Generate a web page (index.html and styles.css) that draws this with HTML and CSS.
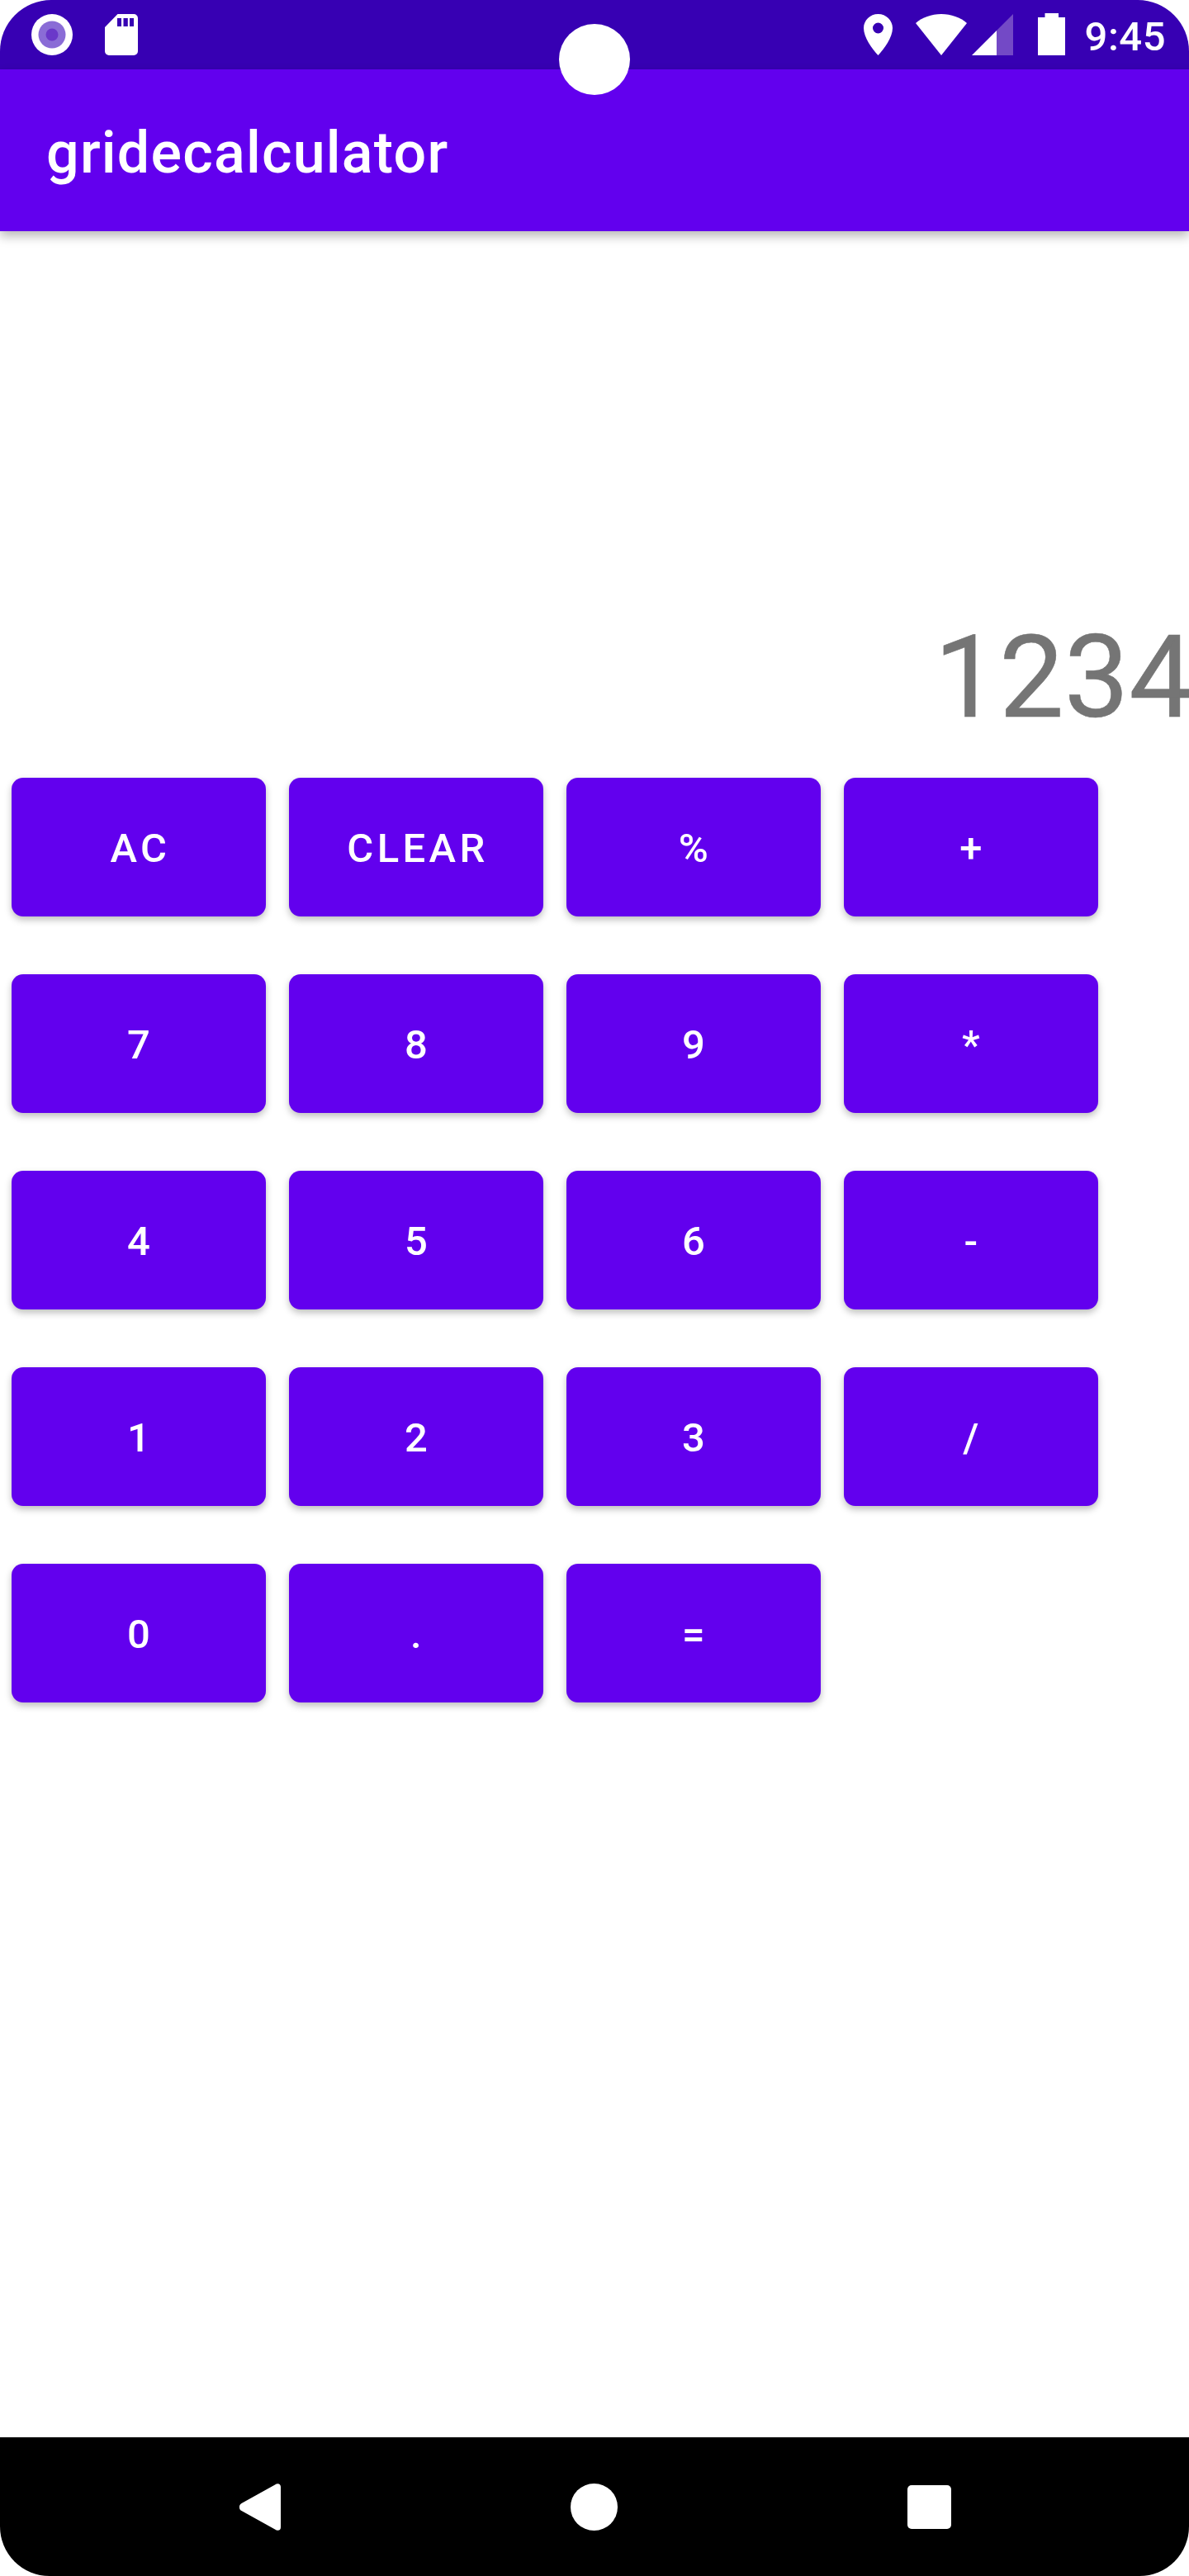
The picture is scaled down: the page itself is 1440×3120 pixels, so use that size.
FILE: index.html
```html
<!DOCTYPE html>
<html lang="en">
<head>
  <meta charset="UTF-8" />
  <meta name="viewport" content="width=device-width, initial-scale=1.0" />
  <title>gridecalculator</title>
  <link rel="stylesheet" href="styles.css">
</head>
<body>
  <div class="screen">
    <div class="status-bar">
      <div class="status-left">
        <svg class="icon" width="50" height="50" viewBox="0 0 50 50">
          <circle cx="25" cy="25" r="25" fill="#fff"/>
          <circle cx="25" cy="25" r="16.5" fill="#8a6cd6"/>
          <circle cx="25" cy="25" r="7.5" fill="#6a38c9"/>
        </svg>
        <svg class="icon" width="40" height="50" viewBox="0 0 40 50">
          <path fill="#fff" fill-rule="evenodd" d="M15.500 0H35A5 5 0 0 1 40 5V45A5 5 0 0 1 35 50H5A5 5 0 0 1 0 45V16ZM15 5V15H20V5ZM22.500 5V15H27.800V5ZM30 5V15H35V5Z"/>
        </svg>
      </div>
      <div class="status-right">
        <svg class="icon pin" width="35" height="50" viewBox="0 0 35 50">
          <path fill="#fff" fill-rule="evenodd" d="M17.500 0C7.800 0 0 7.600 0 17C0 28 10 42 17.500 50C25 42 35 28 35 17C35 7.600 27.200 0 17.500 0ZM17.500 10.500A6.500 6.500 0 1 1 17.500 23.500A6.500 6.500 0 1 1 17.500 10.500Z"/>
        </svg>
        <svg class="icon wifi" width="62" height="50" viewBox="0 0 62 50">
          <path fill="#fff" d="M0 11C8 4 19 0 31 0C43 0 54 4 62 11L31 50Z"/>
        </svg>
        <svg class="icon signal" width="50" height="50" viewBox="0 0 50 50">
          <path fill="#7349c6" d="M50 0V50H30V20Z"/>
          <path fill="#fff" d="M30 20V50H0Z"/>
        </svg>
        <svg class="icon battery" width="33" height="51" viewBox="0 0 33 51">
          <path fill="#fff" d="M8.500 0H25V5H33V51H0V5H8.500Z"/>
        </svg>
        <span class="clock">9:45</span>
      </div>
    </div>

    <header class="app-bar">
      <h1>gridecalculator</h1>
    </header>

    <main class="content">
      <div class="display">1234</div>
      <div class="keys">
        <button class="key">AC</button>
        <button class="key">Clear</button>
        <button class="key">%</button>
        <button class="key">+</button>
        <button class="key">7</button>
        <button class="key">8</button>
        <button class="key">9</button>
        <button class="key">*</button>
        <button class="key">4</button>
        <button class="key">5</button>
        <button class="key">6</button>
        <button class="key">-</button>
        <button class="key">1</button>
        <button class="key">2</button>
        <button class="key">3</button>
        <button class="key">/</button>
        <button class="key">0</button>
        <button class="key">.</button>
        <button class="key">=</button>
      </div>
    </main>

    <nav class="nav-bar">
      <svg width="50" height="57" viewBox="0 0 50 57">
        <path fill="#fff" d="M43 1.500C46 -1 50 0 50 4V53C50 57 46 58 43 55.500L2.500 33C-1 31 -1 26 2.500 24Z"/>
      </svg>
      <svg width="57" height="57" viewBox="0 0 57 57">
        <circle cx="28.500" cy="28.500" r="28.500" fill="#fff"/>
      </svg>
      <svg width="53" height="53" viewBox="0 0 53 53">
        <rect width="53" height="53" rx="5" fill="#fff"/>
      </svg>
    </nav>

    <div class="camera"></div>
  </div>
</body>
</html>
```

FILE: styles.css
```css
* {
  box-sizing: border-box;
}
body {
  margin: 0;
  background: #fff;
  font-family: Roboto, sans-serif;
}
.screen {
  position: relative;
  display: flex;
  flex-direction: column;
  width: 1440px;
  height: 3120px;
  overflow: hidden;
  background: #fff;
}
.status-bar {
  display: flex;
  justify-content: space-between;
  align-items: flex-end;
  flex: none;
  height: 84px;
  padding: 0 28px 17px 38px;
  background: #3700b3;
  border-radius: 62px 62px 0 0;
}
.status-left {
  display: flex;
  align-items: flex-end;
  gap: 39px;
}
.status-right {
  display: flex;
  align-items: flex-end;
}
.icon {
  display: block;
}
.wifi {
  margin-left: 28px;
}
.signal {
  margin-left: 6px;
}
.battery {
  margin-left: 30px;
}
.clock {
  margin-left: 24px;
  margin-bottom: -6px;
  color: #fff;
  font-size: 49px;
  font-weight: 500;
  letter-spacing: 0.5px;
  line-height: 57px;
}
.app-bar {
  position: relative;
  flex: none;
  display: flex;
  align-items: center;
  height: 196px;
  padding: 6px 0 0 56px;
  background: #6200ee;
  box-shadow: 0 6px 12px rgba(0, 0, 0, 0.28);
}
.app-bar h1 {
  margin: 0;
  color: #fff;
  font-size: 70px;
  font-weight: 500;
  letter-spacing: 1.2px;
}
.content {
  flex: 1;
}
.display {
  height: 662px;
  padding-top: 458px;
  margin-right: -6px;
  color: #757575;
  font-size: 140px;
  line-height: 164px;
  text-align: right;
  -webkit-text-stroke: 0.5px #757575;
}
.keys {
  display: grid;
  grid-template-columns: repeat(4, 308px);
  grid-auto-rows: 168px;
  column-gap: 28px;
  row-gap: 70px;
  padding-left: 14px;
}
.key {
  padding: 3px 0 0 4px;
  border: none;
  border-radius: 14px;
  background: #6200ee;
  box-shadow: 0 4px 8px rgba(0, 0, 0, 0.26);
  color: #fff;
  font-family: inherit;
  font-size: 49px;
  font-weight: 500;
  letter-spacing: 4.4px;
  text-transform: uppercase;
}
.nav-bar {
  position: relative;
  flex: none;
  display: flex;
  align-items: center;
  height: 168px;
  background: #000;
  border-radius: 0 0 60px 60px;
}
.nav-bar svg:nth-child(1) {
  margin-left: 290px;
}
.nav-bar svg:nth-child(2),
.nav-bar svg:nth-child(3) {
  margin-left: 351px;
}
.camera {
  position: absolute;
  top: 29px;
  left: 677px;
  width: 86px;
  height: 86px;
  border-radius: 50%;
  background: #fff;
}
```
